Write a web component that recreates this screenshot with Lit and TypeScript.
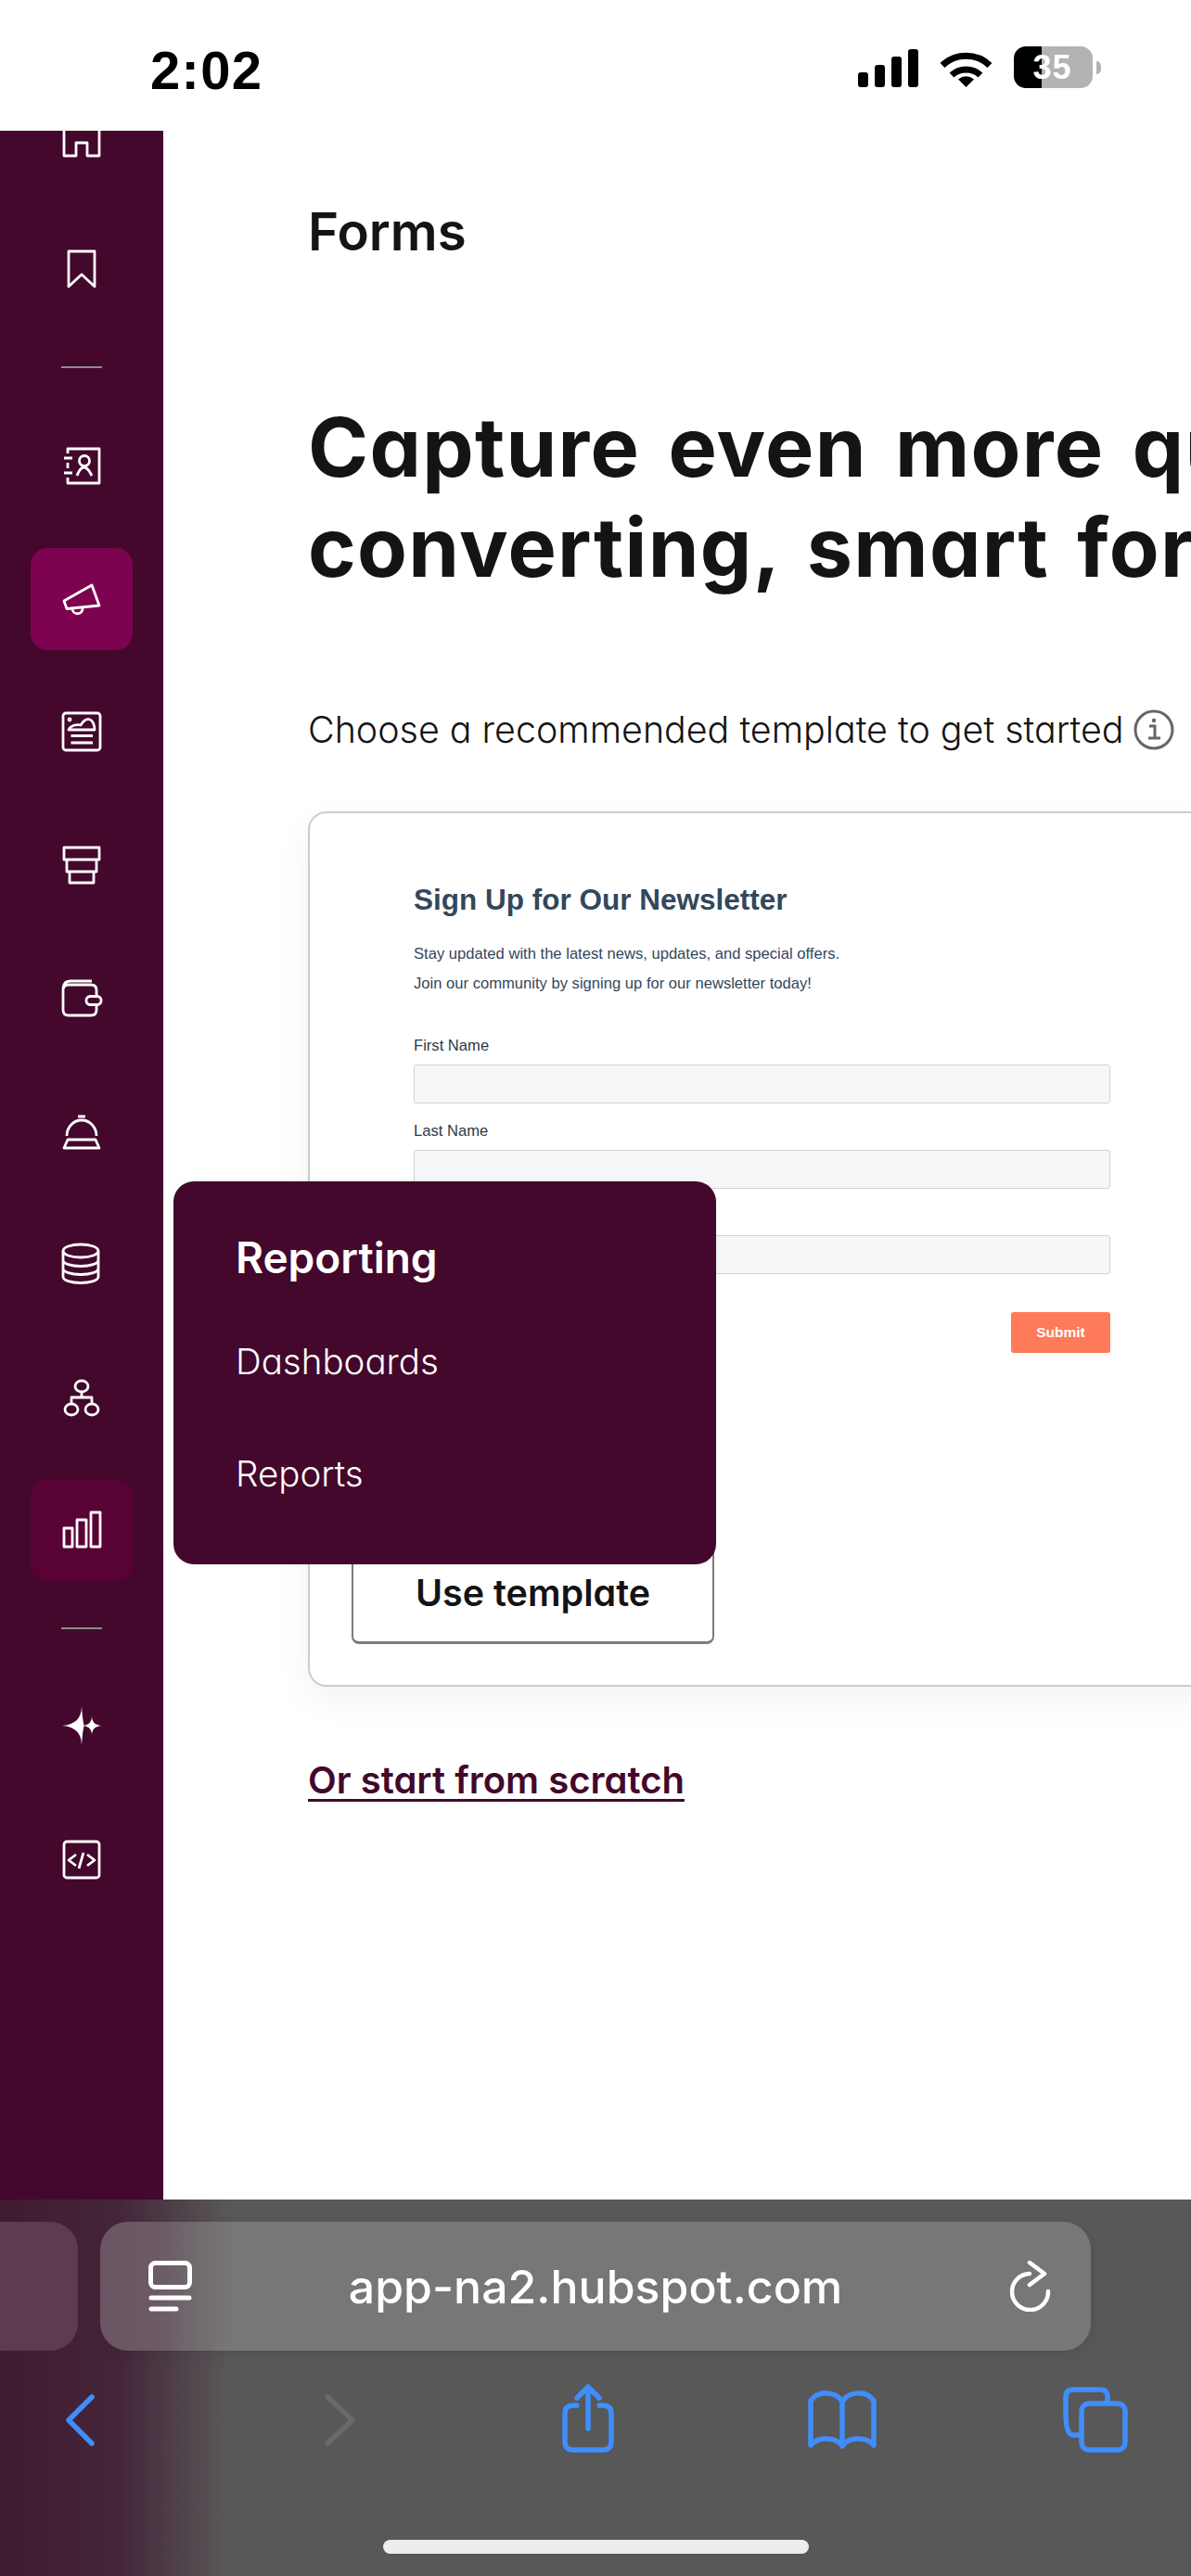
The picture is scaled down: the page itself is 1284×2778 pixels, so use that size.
import { LitElement, css, html, svg } from 'lit'
import { customElement } from 'lit/decorators.js'

/** Sidebar glyphs, drawn around the centre of each 110px item. */
const NAV = [
  { icon: svg`<path d="M-19 21V-8Q-19-12-16-14L-3-21H3L16-14Q19-12 19-8V21H6V7H-6V21Z"/>` },
  { icon: svg`<path d="M-14-19H14V19L0 6-14 19Z"/>` },
  { divider: true },
  {
    icon: svg`<path d="M-15-13V-18H19V19H-15V13M-15-3V3M-19-8H-10M-19 8H-10"/><circle cx="3" cy="-5" r="5.5"/><path d="M-5 11Q2-7 11 11"/>`,
  },
  {
    active: 'on',
    icon: svg`<path d="M-19 2 11-15 19 7-16 10.5ZM-10 10.5A5.5 5.5 0 0 0 1 10"/>`,
  },
  {
    icon: svg`<rect x="-20" y="-20" width="40" height="40" rx="3"/><circle cx="-13" cy="-13" r="1" /><path d="M-14-2C-12-7-5-8-1-7 2-12 6-14 9-13 12-12 14-7 14-2ZM-11.500 4.500H12M-11.500 12H12"/>`,
  },
  { icon: svg`<path d="M-19-19H19V-6H-19ZM-16-6V7H16V-6M-13 7V19H13V7"/>` },
  {
    icon: svg`<path d="M-20-8V13Q-20 19-14 19H10Q16 19 16 13V-8Q16-14 10-14H-14Q-20-14-20-8ZM-20-8Q-20-18-12-18H11"/><rect class="clasp" x="5" y="-1.500" width="16" height="9" rx="4"/>`,
  },
  {
    icon: svg`<path d="M-4-16H4M-16 5A16 17 0 0 1 16 5M-15 9H15L19 18H-19Z"/>`,
  },
  {
    icon: svg`<ellipse cx="-1" cy="-14" rx="19" ry="7"/><path d="M-20-14V14A19 6.500 0 0 0 18 14V-14M-20-4A19 6.500 0 0 0 18-4M-20 5A19 6.500 0 0 0 18 5"/>`,
  },
  {
    icon: svg`<ellipse cx="0" cy="-12" rx="7" ry="6"/><ellipse cx="-11" cy="13" rx="7" ry="6"/><ellipse cx="11" cy="13" rx="7" ry="6"/><path d="M0-6V0M-11 7V0H11V7"/>`,
  },
  {
    active: 'hover',
    icon: svg`<path d="M-19-2H-10V18H-19ZM-5-11H5V18H-5ZM10-19H20V18H10Z"/>`,
  },
  { divider: true },
  {
    icon: svg`<path class="solid" d="M0-22C0-8-8-2-21-1-8 0 0 6 0 20 1 6 2 0 3-1 2-2 1-8 0-22ZM11-12C11-5 14-2 21-1 14 0 11 3 11 10 11 3 8 0 2-1 8-2 11-5 11-12Z"/>`,
  },
  {
    icon: svg`<rect x="-19" y="-20" width="38" height="39" rx="3"/><path d="M-6-6-14 0-6 6M6-6 14 0 6 6M2-8-3 9"/>`,
  },
]

@customElement('app-root')
export class AppRoot extends LitElement {
  private statusBar() {
    return html`
      <header class="status">
        <span class="time">2:02</span>
        <div class="status-right">
          <svg width="65" height="42" viewBox="0 0 65 42">
            <rect x="0" y="26" width="11" height="16" rx="3" />
            <rect x="18" y="18" width="11" height="24" rx="3" />
            <rect x="36" y="9" width="11" height="33" rx="3" />
            <rect x="54" y="1" width="11" height="41" rx="3" />
          </svg>
          <svg class="wifi" width="57" height="42" viewBox="0 0 57 42">
            <path d="M3 18.500A37 37 0 0 1 54 18.500M13 29A23 23 0 0 1 44 29" fill="none" stroke="#000" stroke-width="7" />
            <path d="M20 33.500Q28.500 27 37 33.500L28.500 42Z" />
          </svg>
          <div class="battery">
            <i class="full"></i><i class="empty"></i>
            <span>35</span>
          </div>
          <i class="nub"></i>
        </div>
      </header>
    `
  }

  private sidebar() {
    return html`
      <nav class="side">
        ${NAV.map((n) =>
          n.divider
            ? html`<div class="rule"></div>`
            : html`<div class="item ${n.active ?? ''}">
                <svg width="48" height="48" viewBox="-24 -24 48 48">${n.icon}</svg>
              </div>`,
        )}
      </nav>
    `
  }

  private card() {
    return html`
      <section class="card">
        <div class="preview">
          <h3>Sign Up for Our Newsletter</h3>
          <p>Stay updated with the latest news, updates, and special offers.</p>
          <p>Join our community by signing up for our newsletter today!</p>
          <label class="first">First Name</label>
          <div class="field"></div>
          <label>Last Name</label>
          <div class="field"></div>
          <label class="blank"></label>
          <div class="field"></div>
          <div class="submit">Submit</div>
        </div>
        <button class="use">Use template</button>
      </section>
    `
  }

  private safari() {
    return html`
      <footer class="safari">
        <div class="url-row">
          <div class="tab-peek"></div>
          <div class="url">
            <svg width="47" height="56" viewBox="0 0 47 56" fill="none" stroke="#fff" stroke-width="5" stroke-linecap="round">
              <rect x="2.500" y="2.500" width="42" height="26" rx="5" />
              <path d="M3 40H44M3 52H30" />
            </svg>
            <span>app-na2.hubspot.com</span>
            <svg width="44" height="55" viewBox="0 0 44 55" fill="none" stroke="#fff" stroke-width="4.500" stroke-linecap="round" stroke-linejoin="round">
              <path d="M21 14A19.500 19.500 0 1 0 41 33M21 2 37 14 21 26" />
            </svg>
          </div>
        </div>
        <div class="tools">
          <svg width="80" height="80" viewBox="-40 -40 80 80"><path d="M13-25-12 0 13 25" /></svg>
          <svg class="off" width="80" height="80" viewBox="-40 -40 80 80"><path d="M-7-25 20 0-7 25" /></svg>
          <svg width="80" height="80" viewBox="-40 -40 80 80">
            <path d="M-12-16H-16Q-25-16-25-7V23Q-25 32-16 32H16Q25 32 25 23V-7Q25-16 16-16H12M0 9V-35M-12-24 0-36 12-24" />
          </svg>
          <svg width="80" height="80" viewBox="-40 -40 80 80">
            <path d="M0-20C-6-31-26-33-34-21V27C-26 17-6 18 0 28 6 18 26 17 34 27V-21C26-33 6-31 0-20V28" />
          </svg>
          <svg width="80" height="80" viewBox="-40 -40 80 80">
            <path d="M-19 16H-25Q-33 16-33-8V-25Q-33-33-25-33H4Q12-33 12-25V-20" />
            <rect x="-16" y="-18" width="47" height="50" rx="8" />
          </svg>
        </div>
        <div class="home-bar"></div>
      </footer>
    `
  }

  render() {
    return html`
      ${this.statusBar()}
      <div class="middle">
        ${this.sidebar()}
        <main class="main">
          <div class="crumb">Forms</div>
          <h1><span>Capture even more qu</span><span>converting, smart for</span></h1>
          <div class="choose">
            Choose a recommended template to get started
            <svg width="44" height="44" viewBox="0 0 44 44">
              <circle cx="22" cy="22" r="20" fill="none" stroke="#666" stroke-width="3" />
              <path d="M17 18H23V31M16 31H29" fill="none" stroke="#666" stroke-width="3" />
              <circle cx="22" cy="12" r="2.200" fill="#666" />
            </svg>
          </div>
          ${this.card()}
          <a class="scratch" href="#">Or start from scratch</a>
        </main>
        <div class="popover">
          <div class="pop-title">Reporting</div>
          <div class="pop-link">Dashboards</div>
          <div class="pop-link">Reports</div>
        </div>
      </div>
      ${this.safari()}
    `
  }

  static styles = css`
    :host {
      display: grid;
      grid-template-rows: 141px 2231px 406px;
      width: 1284px;
      height: 2778px;
      overflow: hidden;
      background: #fff;
      font-family: Inter, 'Liberation Sans', sans-serif;
      font-feature-settings: 'cv11';
      color: #141414;
    }
    .status {
      display: flex;
      align-items: center;
      padding: 10px 97px 0 162px;
      background: #fff;
    }
    .time {
      font: 700 58px/60px 'Liberation Sans', sans-serif;
      color: #000;
      letter-spacing: 1.300px;
    }
    .status-right {
      display: flex;
      align-items: center;
      margin-left: auto;
      transform: translateY(-3px);
    }
    .wifi {
      margin: 0 23px 0 23px;
    }
    .battery {
      position: relative;
      display: flex;
      width: 85px;
      height: 45px;
      border-radius: 13px;
      overflow: hidden;
    }
    .battery .full {
      width: 30px;
      background: #000;
    }
    .battery .empty {
      flex: 1;
      background: #b3b3b3;
    }
    .battery span {
      position: absolute;
      inset: 0;
      text-align: center;
      font: 700 36px/46px 'Liberation Sans', sans-serif;
      color: #fff;
      letter-spacing: 1px;
      transform: translateX(-1px);
    }
    .nub {
      width: 5px;
      height: 14px;
      margin-left: 4px;
      background: #b3b3b3;
      border-radius: 0 7px 7px 0;
    }

    .middle {
      position: relative;
      display: flex;
      overflow: hidden;
    }
    .side {
      flex: 0 0 176px;
      display: flex;
      flex-direction: column;
      gap: 33.5px;
      margin-top: -49.5px;
      background: #43082b;
      align-items: center;
    }
    .item {
      flex: none;
      display: flex;
      align-items: center;
      justify-content: center;
      width: 110px;
      height: 110px;
      border-radius: 18px;
    }
    .item.on {
      background: #7d024f;
    }
    .item.hover {
      background: #590235;
    }
    .item svg {
      fill: none;
      stroke: #fff;
      stroke-width: 2.8;
      stroke-linejoin: round;
    }
    .item svg .solid {
      fill: #fff;
      stroke: none;
    }
    .item svg .clasp {
      fill: #43082b;
    }
    .rule {
      flex: none;
      width: 44px;
      height: 2px;
      margin: 16.5px 0;
      background: #8d8d8d;
    }

    .main {
      flex: 1;
      min-width: 0;
      padding-left: 156px;
      overflow: hidden;
    }
    .crumb {
      margin-top: 79px;
      font-size: 56.500px;
      line-height: 60px;
      font-weight: 600;
    }
    h1 {
      margin: 148px 0 0;
      font-size: 88px;
      line-height: 108px;
      font-weight: 700;
      letter-spacing: 1.300px;
      word-spacing: 8px;
      white-space: nowrap;
    }
    h1 span {
      display: block;
    }
    .choose {
      display: flex;
      align-items: center;
      gap: 11px;
      margin-top: 113px;
      height: 60px;
      font-size: 39.400px;
      font-weight: 300;
      white-space: nowrap;
    }
    .card {
      box-sizing: border-box;
      width: 1100px;
      height: 944px;
      margin-top: 58px;
      border: 2px solid #cccccc;
      border-radius: 20px;
      box-shadow: 0 14px 40px rgba(0, 0, 0, 0.05);
    }
    .preview {
      box-sizing: border-box;
      width: 863px;
      height: 786px;
      padding: 75px 0 0 112px;
      font-family: 'Liberation Sans', sans-serif;
      font-feature-settings: normal;
      color: #33475b;
    }
    .preview h3 {
      margin: 0 0 31px;
      height: 36px;
      font-size: 31.500px;
      line-height: 36px;
      font-weight: 700;
    }
    .preview p {
      margin: 0 0 12px;
      height: 20px;
      font-size: 16.600px;
      line-height: 20px;
    }
    .preview label {
      display: block;
      height: 20px;
      margin: 20px 0 10px;
      font-size: 16.600px;
      line-height: 20px;
      color: #2c3a47;
    }
    .preview label.first {
      margin-top: 47px;
    }
    .field {
      box-sizing: border-box;
      height: 42px;
      background: #f6f7f9;
      border: 1px solid #d0d2d5;
      border-radius: 3px;
    }
    .submit {
      width: 107px;
      height: 44px;
      margin: 41px 0 0 auto;
      background: #ff7a59;
      border-radius: 3px;
      color: #fff;
      font-size: 15.500px;
      font-weight: 700;
      line-height: 44px;
      text-align: center;
    }
    .use {
      display: block;
      box-sizing: border-box;
      width: 391px;
      height: 110px;
      margin-left: 45px;
      padding: 0;
      background: #fff;
      border: 2px solid #7c7c7c;
      border-bottom-width: 3px;
      border-radius: 8px;
      font: inherit;
      font-size: 39.500px;
      font-weight: 600;
      color: #141414;
    }
    .scratch {
      display: inline-block;
      margin-top: 78px;
      font-size: 40px;
      line-height: 46px;
      font-weight: 600;
      color: #43082b;
      text-decoration: underline;
      text-decoration-thickness: 3px;
      text-underline-offset: 6px;
    }
    .popover {
      position: absolute;
      left: 187px;
      top: 1133px;
      box-sizing: border-box;
      width: 585px;
      height: 413px;
      padding: 50px 67px 0;
      background: #43082b;
      border-radius: 22px;
      color: #fff;
      box-shadow: 0 0 12px rgba(0, 0, 0, 0.04);
    }
    .pop-title {
      height: 64px;
      font-size: 46px;
      line-height: 64px;
      font-weight: 600;
    }
    .pop-link {
      height: 64px;
      margin-top: 57px;
      font-size: 38.500px;
      line-height: 64px;
      font-weight: 300;
    }
    .pop-title + .pop-link {
      margin-top: 48px;
    }

    .safari {
      display: flex;
      flex-direction: column;
      padding-top: 24px;
      background: linear-gradient(90deg, #3f1b31 0, #45263a 130px, #585858 245px);
      overflow: hidden;
    }
    .url-row {
      display: flex;
      gap: 24px;
      margin-left: -40px;
    }
    .tab-peek,
    .url {
      height: 139px;
      border-radius: 30px;
    }
    .tab-peek {
      width: 124px;
      background: #5c3c4e;
    }
    .url {
      display: flex;
      align-items: center;
      box-sizing: border-box;
      width: 1068px;
      padding: 0 43px 0 52px;
      background: linear-gradient(90deg, #6b5562 0, #6b5a65 60px, #777777 140px);
      color: #fff;
      box-shadow: 0 4px 16px rgba(0, 0, 0, 0.08);
    }
    .url span {
      flex: 1;
      padding-right: 12px;
      text-align: center;
      font-size: 50px;
      font-weight: 500;
      font-feature-settings: normal;
    }
    .tools {
      display: grid;
      grid-template-columns: repeat(5, 274px);
      justify-items: center;
      align-items: center;
      height: 150px;
      margin-left: -51px;
    }
    .tools svg {
      fill: none;
      stroke: #3f8efc;
      stroke-width: 5.500;
      stroke-linecap: round;
      stroke-linejoin: round;
    }
    .tools svg.off {
      stroke: #6a6a6a;
    }
    .home-bar {
      width: 459px;
      height: 15px;
      margin: 54px 0 0 413px;
      border-radius: 8px;
      background: #ededed;
    }
  `
}

declare global {
  interface HTMLElementTagNameMap {
    'app-root': AppRoot
  }
}
